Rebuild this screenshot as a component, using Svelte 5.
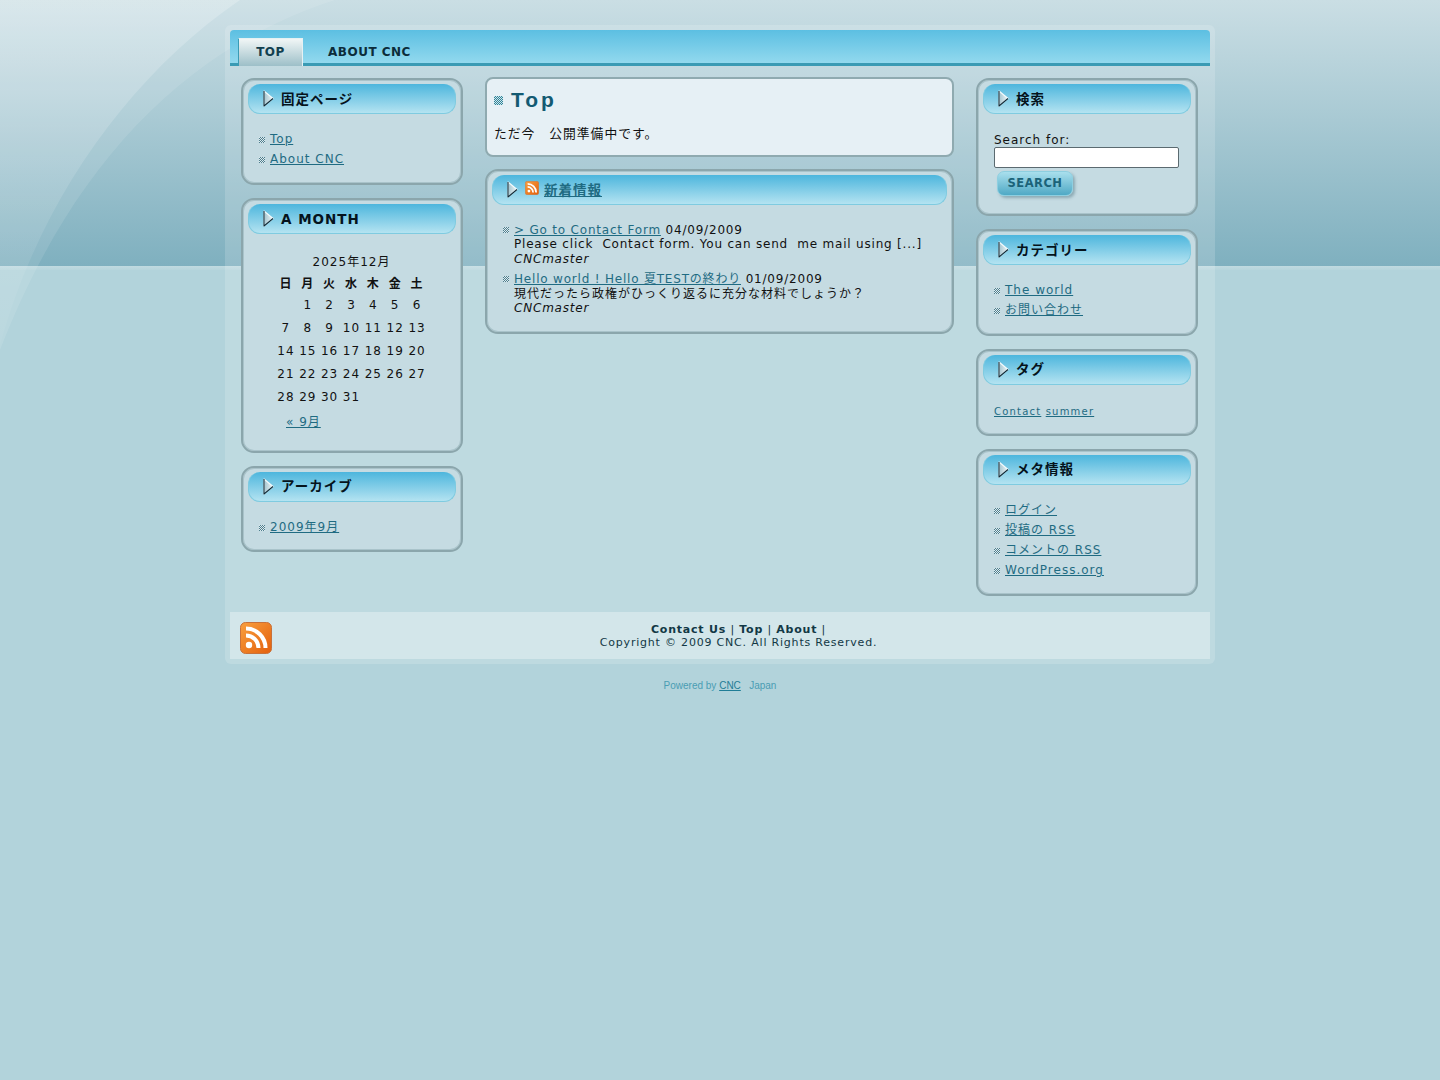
<script>
  const calendar = [
    ['', '1', '2', '3', '4', '5', '6'],
    ['7', '8', '9', '10', '11', '12', '13'],
    ['14', '15', '16', '17', '18', '19', '20'],
    ['21', '22', '23', '24', '25', '26', '27'],
    ['28', '29', '30', '31', '', '', '']
  ];
  const weekdays = ['日', '月', '火', '水', '木', '金', '土'];
  const posts = [
    { title: '> Go to Contact Form', date: '04/09/2009', text: 'Please click  Contact form. You can send  me mail using [...]', ja: false },
    { title: 'Hello world ! Hello 夏TESTの終わり', date: '01/09/2009', text: '現代だったら政権がひっくり返るに充分な材料でしょうか？', ja: true }
  ];
</script>

{#snippet arrow()}
  <svg class="arrow" width="11" height="17" viewBox="0 0 11 17">
    <defs>
      <linearGradient id="arrowfill" x1="0" y1="0" x2="1" y2="0">
        <stop offset="0" stop-color="#a3c4cf" />
        <stop offset="1" stop-color="#eef6f8" />
      </linearGradient>
    </defs>
    <path d="M1 1 L10 8.5 L1 16 Z" fill="url(#arrowfill)" stroke="#f4fafb" stroke-width="1.2" stroke-linejoin="round" />
    <path d="M1 1 V16 L10 8.5" fill="none" stroke="#0d2a38" stroke-width="1.1" stroke-linejoin="round" />
  </svg>
{/snippet}

{#snippet links(items)}
  <ul class="links">
    {#each items as item}
      <li><a href="#top">{item}</a></li>
    {/each}
  </ul>
{/snippet}

{#snippet feedicon(size)}
  <svg class="feed" width={size} height={size} viewBox="0 0 32 32">
    <defs>
      <linearGradient id="feedfill" x1="0" y1="0" x2="1" y2="1">
        <stop offset="0" stop-color="#f9a03f" />
        <stop offset="1" stop-color="#e35f0c" />
      </linearGradient>
    </defs>
    <rect x="0.5" y="0.5" width="31" height="31" rx="5" fill="url(#feedfill)" stroke="#c8713a" />
    <circle cx="9" cy="23" r="3.2" fill="#fff" />
    <path d="M6 13.5 A12.5 12.5 0 0 1 18.5 26" fill="none" stroke="#fff" stroke-width="4" />
    <path d="M6 6.5 A19.5 19.5 0 0 1 25.5 26" fill="none" stroke="#fff" stroke-width="4" />
  </svg>
{/snippet}

<svg class="swoosh" width="360" height="360" viewBox="0 0 360 360">
  <defs>
    <linearGradient id="glow" x1="0" y1="0" x2="0" y2="1">
      <stop offset="0" stop-color="#fff" stop-opacity="0.22" />
      <stop offset="1" stop-color="#fff" stop-opacity="0.03" />
    </linearGradient>
  </defs>
  <path d="M0 0 H335 C180 50 70 170 0 350 Z" fill="#fff" opacity="0.1" />
  <path d="M0 0 H240 C130 75 40 200 0 345 Z" fill="url(#glow)" />
</svg>

<div class="page">
  <div class="wrapper">
    <nav class="tabs">
      <a class="tab current" href="#top">TOP</a>
      <a class="tab" href="#top">ABOUT CNC</a>
    </nav>

    <div class="columns">
      <aside class="side">
        <section class="box">
          <h3>{@render arrow()}固定ページ</h3>
          {@render links(['Top', 'About CNC'])}
        </section>
        <section class="box">
          <h3 class="latin">{@render arrow()}A MONTH</h3>
          <table class="calendar">
            <caption>2025年12月</caption>
            <thead>
              <tr>{#each weekdays as day}<th>{day}</th>{/each}</tr>
            </thead>
            <tbody>
              {#each calendar as week}
                <tr>{#each week as day}<td>{day}</td>{/each}</tr>
              {/each}
            </tbody>
          </table>
          <a class="prev" href="#top">« 9月</a>
        </section>
        <section class="box">
          <h3>{@render arrow()}アーカイブ</h3>
          {@render links(['2009年9月'])}
        </section>
      </aside>

      <main class="center">
        <article class="post">
          <h2><i class="dots"></i>Top</h2>
          <p>ただ今　公開準備中です。</p>
        </article>
        <section class="box wide">
          <h3>{@render arrow()}{@render feedicon(14)}<a href="#top">新着情報</a></h3>
          <ul class="news">
            {#each posts as post}
              <li>
                <a href="#top">{post.title}</a> {post.date}
                <div class="excerpt" class:ja={post.ja}>{post.text}</div>
                <cite>CNCmaster</cite>
              </li>
            {/each}
          </ul>
        </section>
      </main>

      <aside class="side">
        <section class="box">
          <h3>{@render arrow()}検索</h3>
          <form class="search" onsubmit={(e) => e.preventDefault()}>
            <label for="s">Search for:</label>
            <input id="s" type="text" />
            <button type="submit">SEARCH</button>
          </form>
        </section>
        <section class="box">
          <h3>{@render arrow()}カテゴリー</h3>
          {@render links(['The world', 'お問い合わせ'])}
        </section>
        <section class="box">
          <h3>{@render arrow()}タグ</h3>
          <div class="tags"><a href="#top">Contact</a> <a href="#top">summer</a></div>
        </section>
        <section class="box">
          <h3>{@render arrow()}メタ情報</h3>
          {@render links(['ログイン', '投稿の RSS', 'コメントの RSS', 'WordPress.org'])}
        </section>
      </aside>
    </div>

    <footer class="foot">
      {@render feedicon(32)}
      <div class="foottext">
        <div><b>Contact Us</b> | <b>Top</b> | <b>About</b> |</div>
        <div>Copyright © 2009 CNC. All Rights Reserved.</div>
      </div>
    </footer>
  </div>

  <div class="powered">Powered by <a href="#top">CNC</a> &nbsp; Japan</div>
</div>

<style>
  :global(body) {
    background: linear-gradient(#cadee4 0, #7fb0bf 266px, #c0dae0 266px, #b6d5dc 270px) 0 0 / 100% 270px no-repeat, #b2d3db;
    font-family: "DejaVu Sans", "Noto Sans CJK JP", sans-serif;
    font-size: 12px;
    color: #111;
    min-height: 1080px;
  }

  .swoosh {
    position: absolute;
    left: 0;
    top: 0;
  }

  .page {
    position: relative;
    width: 990px;
    margin: 0 auto;
    padding-top: 25px;
  }

  .wrapper {
    padding: 5px;
    border-radius: 6px;
    background: rgba(255, 255, 255, 0.16);
  }

  .tabs {
    display: flex;
    align-items: flex-end;
    height: 33px;
    padding-left: 8px;
    border-bottom: 3px solid #3a9bb4;
    border-radius: 4px 4px 0 0;
    background: linear-gradient(#5cbfe2, #92d9ee);
  }

  .tab {
    box-sizing: border-box;
    width: 65px;
    height: 28px;
    margin-right: 25px;
    margin-bottom: -3px;
    line-height: 28px;
    text-align: center;
    color: #0c2c3a;
    font-weight: bold;
    font-size: 12px;
    letter-spacing: 0.5px;
    text-decoration: none;
    white-space: nowrap;
  }

  .tab.current {
    line-height: 26px;
    color: #12404f;
    border: 1px solid #e6f1f3;
    border-left-color: #3a9bb4;
    border-bottom: 0;
    background: linear-gradient(#f1f6f6, #9dbfc8);
  }

  .columns {
    display: grid;
    grid-template-columns: 222px 469px 222px;
    column-gap: 22px;
    align-items: start;
    padding: 12px 0 16px 11px;
  }

  .side,
  .center {
    display: flex;
    flex-direction: column;
    gap: 13px;
  }

  .center {
    gap: 12px;
    margin-top: -1px;
  }

  .box {
    box-sizing: border-box;
    padding: 4px 5px 13px;
    border: 2px solid #8ba6ac;
    border-radius: 13px;
    background: #c5dbe2;
    box-shadow: inset 0 0 0 1px #a9c3ca;
  }

  .wide {
    padding-bottom: 17px;
  }

  h3 {
    display: flex;
    align-items: center;
    height: 30px;
    margin: 0 0 15px;
    padding: 0 0 2px 14px;
    box-sizing: border-box;
    border: 1px solid #7fcbe0;
    border-top: 0;
    border-radius: 12px;
    background: linear-gradient(#4db6dd, #b4e3f1);
    font-size: 13.5px;
    font-weight: bold;
    letter-spacing: 1px;
    color: #05131c;
  }

  h3.latin {
    padding: 2px 0 0 14px;
  }

  .arrow {
    margin: 2px 7px 0 0;
    flex: none;
  }

  .latin .arrow {
    margin-top: -2px;
  }

  .feed {
    flex: none;
  }

  h3 .feed {
    margin: -2px 5px 0 0;
  }

  a {
    color: #1f6b82;
  }

  .links {
    list-style: none;
    margin: 0;
    padding: 0 0 0 7px;
  }

  .links li,
  .news li {
    position: relative;
    letter-spacing: 1px;
  }

  .links li {
    padding-left: 15px;
    line-height: 20.3px;
  }

  .links li::before,
  .news li::before {
    content: "";
    position: absolute;
    left: 4px;
    top: 8px;
    width: 6px;
    height: 6px;
    background: repeating-conic-gradient(#4d7f8e 0 25%, #dfeaee 0 50%) 0 0 / 2px 2px;
  }

  .calendar {
    width: 153px;
    margin: 0 0 0 27px;
    border-collapse: collapse;
    letter-spacing: 1px;
    table-layout: fixed;
  }

  .calendar caption {
    height: 15px;
    line-height: 15px;
    text-align: center;
    padding: 6px 0 1px;
  }

  .calendar th,
  .calendar td {
    padding: 0;
    text-align: center;
    height: 23px;
  }

  .calendar th {
    font-weight: bold;
  }

  .prev {
    display: inline-block;
    margin: 3px 0 9px 38px;
    letter-spacing: 1px;
  }

  .post {
    padding: 8px 7px 13px;
    border: 2px solid #8faab0;
    border-radius: 8px;
    background: #e6f0f5;
  }

  .post h2 {
    display: flex;
    align-items: center;
    margin: 0 0 12px;
    font-size: 21px;
    line-height: 26px;
    font-family: "Liberation Sans", sans-serif;
    color: #135a72;
    letter-spacing: 3px;
  }

  .dots {
    width: 9px;
    height: 9px;
    margin-right: 8px;
    background: repeating-conic-gradient(#2f8398 0 25%, #cfe6ec 0 50%) 0 0 / 2px 2px;
  }

  .post p {
    margin: 0;
    font-size: 12.8px;
    letter-spacing: 1px;
    line-height: 17px;
  }

  .news {
    list-style: none;
    margin: 0;
    padding: 3px 0 0 7px;
  }

  .news li {
    padding-left: 15px;
    margin-bottom: 6px;
    line-height: 14.4px;
    letter-spacing: 0.8px;
  }

  .news li:last-child {
    margin-bottom: 0;
  }

  .news li::before {
    top: 4px;
  }

  .excerpt {
    white-space: pre-wrap;
  }

  .excerpt.ja {
    letter-spacing: 1px;
  }

  cite {
    font-style: italic;
  }

  .search {
    display: flex;
    flex-direction: column;
    align-items: flex-start;
    padding: 4px 0 0 11px;
    letter-spacing: 1px;
  }

  label {
    line-height: 14px;
  }

  input {
    box-sizing: border-box;
    width: 185px;
    height: 21px;
    margin: 0;
    padding: 0 2px;
    border: 1px solid #5b6a70;
    border-radius: 2px;
    background: #fff;
  }

  button {
    width: 76px;
    height: 25px;
    margin: 3px 0 5px 3px;
    padding: 0 0 2px;
    border: 1px solid #8ecfe0;
    border-radius: 7px;
    background: linear-gradient(#a9dfed, #4fa9c5);
    box-shadow: 2px 2px 3px rgba(70, 110, 125, 0.45);
    font: bold 11.5px "DejaVu Sans", sans-serif;
    letter-spacing: 0.5px;
    color: #1b6379;
  }

  .tags {
    padding: 5px 0 2px 11px;
    font-size: 10px;
    letter-spacing: 1.2px;
    line-height: 14px;
  }

  .foot {
    display: flex;
    align-items: flex-start;
    height: 47px;
    padding: 10px 5px 0 10px;
    box-sizing: border-box;
    background: #d3e6ea;
  }

  .foottext {
    flex: 1;
    padding-top: 1px;
    text-align: center;
    font-size: 11px;
    letter-spacing: 0.8px;
    line-height: 13px;
    color: #123845;
  }

  .powered {
    margin-top: 16px;
    text-align: center;
    font: 10px "Liberation Sans", sans-serif;
    color: #4a9db3;
  }

  .powered a {
    color: #1f7d96;
  }
</style>
